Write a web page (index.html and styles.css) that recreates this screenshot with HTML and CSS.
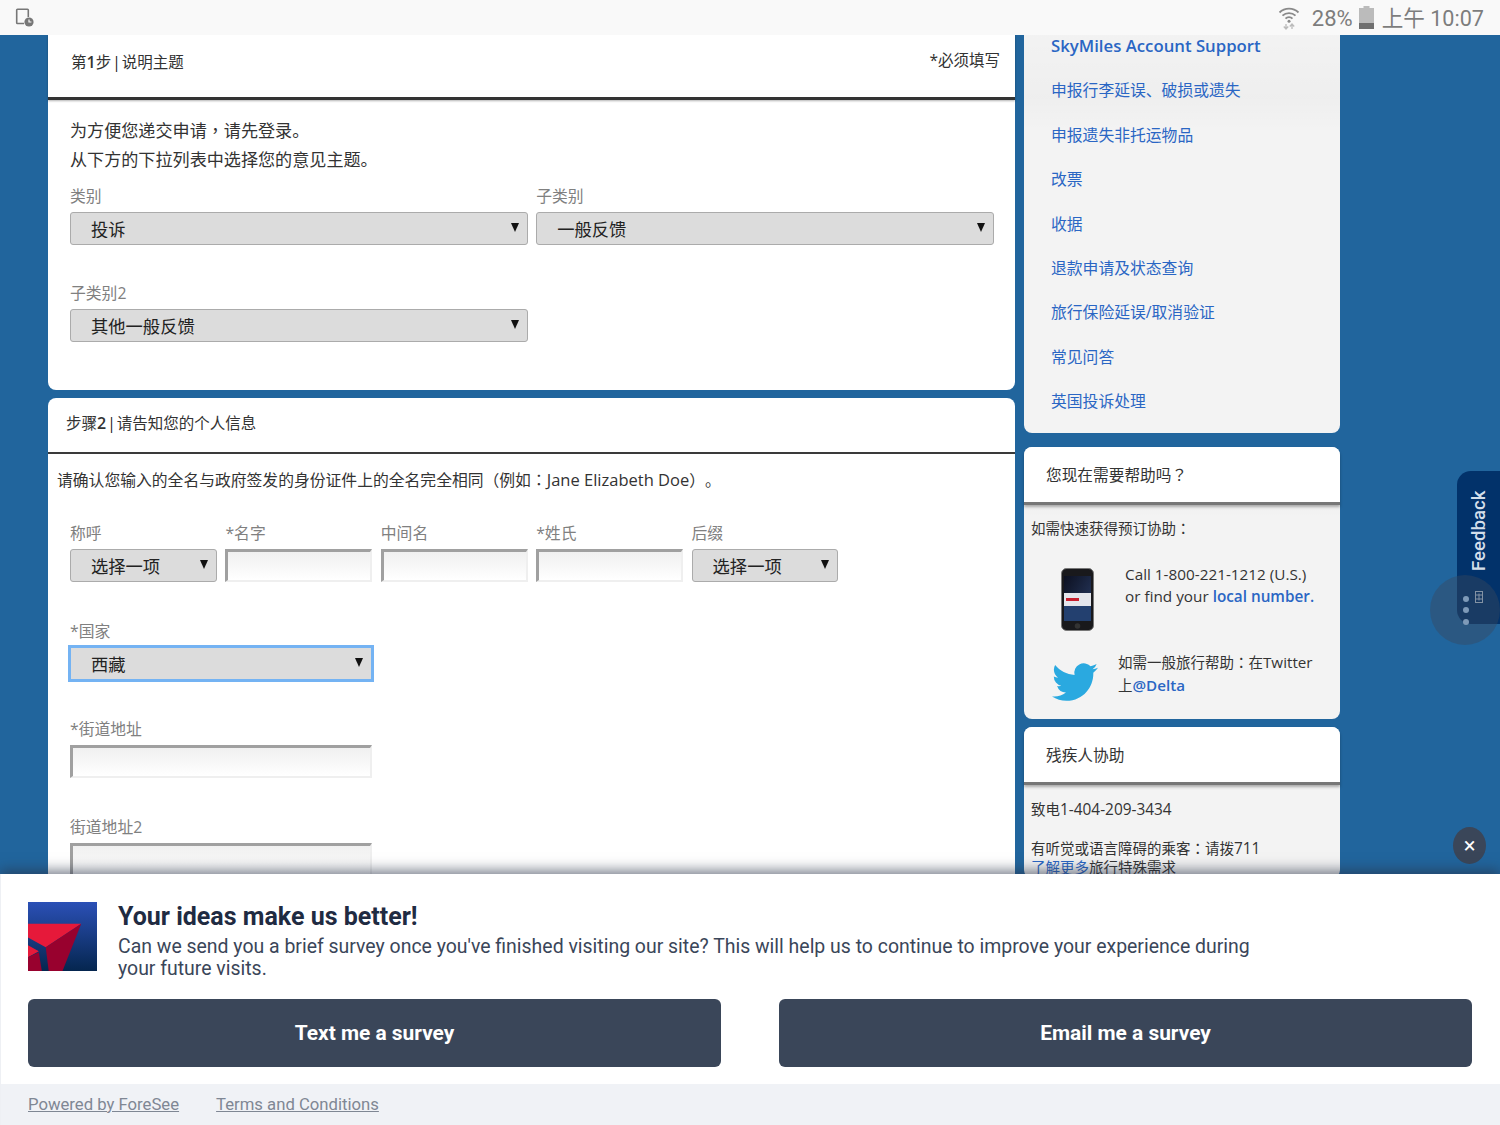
FILE: index.html
```html
<!DOCTYPE html>
<html lang="zh-CN">
<head>
<meta charset="utf-8">
<title>Delta 意见反馈</title>
<link rel="stylesheet" href="styles.css">
</head>
<body>
<div class="app">
  <header class="status">
    <svg class="status-doc" viewBox="0 0 20 20" width="20" height="20" fill="none" stroke="#777" stroke-width="1.6">
      <path d="M9 15.5H2.5a.8.8 0 0 1-.8-.8V2a.8.8 0 0 1 .8-.8h10a.8.8 0 0 1 .8.8v7"/>
      <circle cx="14" cy="14" r="4.6" fill="#777" stroke="none"/>
      <path d="M14 11.5V14h2.4" stroke="#f9f9f9" stroke-width="1.2"/>
    </svg>
    <div class="status-right">
      <svg class="wifi" viewBox="0 0 22 24" width="22" height="24" fill="none" stroke="#8a8a8a" stroke-width="1.8">
        <path d="M1.5 6.5a13.5 13.5 0 0 1 19 0"/>
        <path d="M4.5 9.7a9.3 9.3 0 0 1 13 0"/>
        <path d="M7.5 12.7a5 5 0 0 1 7 0"/>
        <circle cx="11" cy="15.2" r="1.5" fill="#8a8a8a" stroke="none"/>
        <path d="M8 18v5M5.8 20.5 8 23l2.2-2.5M14 23v-5M11.8 20.5 14 18l2.2 2.5" stroke="#bbb" stroke-width="1.3"/>
      </svg>
      <span class="pct">28%</span>
      <svg class="battery" viewBox="0 0 15 23" width="15" height="23">
        <rect x="4.5" y="0" width="6" height="2" fill="#bbb"/>
        <rect x="0" y="2" width="15" height="15" fill="#bbb"/>
        <rect x="0" y="17" width="15" height="6" fill="#6f6f6f"/>
      </svg>
      <span class="clock">上午 10:07</span>
    </div>
  </header>

  <main class="main">
    <div class="col-left">
      <section class="card card-first">
        <div class="card-head">
          <span>第<b class="num">1</b>步<span class="pipe">|</span>说明主题</span>
          <span class="required">*必须填写</span>
        </div>
        <div class="card-body">
          <p class="lead">为方便您递交申请<span class="pn" lang="zh-TW">，</span>请先登录。<br>从下方的下拉列表中选择您的意见主题。</p>
          <div class="form-grid">
            <div class="field span-3">
              <label class="lbl">类别</label>
              <div class="select-wrap"><select class="sel"><option>投诉</option></select></div>
            </div>
            <div class="field span-3">
              <label class="lbl">子类别</label>
              <div class="select-wrap"><select class="sel"><option>一般反馈</option></select></div>
            </div>
            <div class="field span-3">
              <label class="lbl">子类别2</label>
              <div class="select-wrap"><select class="sel"><option>其他一般反馈</option></select></div>
            </div>
          </div>
        </div>
      </section>

      <section class="card card-second">
        <div class="card-head head-thin">
          <span>步骤<b class="num">2</b><span class="pipe">|</span>请告知您的个人信息</span>
        </div>
        <p class="notice">请确认您输入的全名与政府签发的身份证件上的全名完全相同（例如<span class="pn" lang="zh-TW">：</span><span class="latin-lg">Jane Elizabeth Doe</span>）。</p>
        <div class="form-grid personal">
          <div class="field">
            <label class="lbl">称呼</label>
            <div class="select-wrap"><select class="sel"><option>选择一项</option></select></div>
          </div>
          <div class="field">
            <label class="lbl">*名字</label>
            <input class="inp" type="text">
          </div>
          <div class="field">
            <label class="lbl">中间名</label>
            <input class="inp" type="text">
          </div>
          <div class="field">
            <label class="lbl">*姓氏</label>
            <input class="inp" type="text">
          </div>
          <div class="field">
            <label class="lbl">后缀</label>
            <div class="select-wrap"><select class="sel"><option>选择一项</option></select></div>
          </div>
          <div class="field wide-row">
            <label class="lbl">*国家</label>
            <div class="select-wrap focused"><select class="sel"><option>西藏</option></select></div>
          </div>
          <div class="field wide-row">
            <label class="lbl">*街道地址</label>
            <input class="inp" type="text">
          </div>
          <div class="field wide-row">
            <label class="lbl">街道地址2</label>
            <input class="inp" type="text">
          </div>
        </div>
      </section>
    </div>

    <aside class="col-right">
      <nav class="side-card side-links">
        <a href="#">SkyMiles Account Support</a>
        <a href="#">申报行李延误、破损或遗失</a>
        <a href="#">申报遗失非托运物品</a>
        <a href="#">改票</a>
        <a href="#">收据</a>
        <a href="#">退款申请及状态查询</a>
        <a href="#">旅行保险延误/取消验证</a>
        <a href="#">常见问答</a>
        <a href="#">英国投诉处理</a>
      </nav>

      <section class="side-card">
        <h3 class="side-head">您现在需要帮助吗<span class="pn" lang="zh-TW">？</span></h3>
        <p class="side-line">如需快速获得预订协助<span class="pn" lang="zh-TW">：</span></p>
        <div class="call-row">
          <svg class="phone" viewBox="0 0 33 63" width="33" height="63">
            <defs>
              <linearGradient id="screenTop" x1="0" y1="0" x2="1" y2="1">
                <stop offset="0" stop-color="#0c1020"/>
                <stop offset="1" stop-color="#2a3d66"/>
              </linearGradient>
            </defs>
            <rect x="0.500" y="0.500" width="32" height="62" rx="5" fill="#19191c" stroke="#777"/>
            <rect x="3" y="8" width="27" height="45" fill="url(#screenTop)"/>
            <rect x="3" y="25" width="27" height="13" fill="#e4e6ec"/>
            <rect x="5" y="30" width="13" height="3" fill="#c8202f"/>
            <rect x="3" y="38" width="27" height="15" fill="#23406f"/>
            <circle cx="16.500" cy="58" r="2.800" fill="#333"/>
          </svg>
          <p class="call-text">Call 1-800-221-1212 (U.S.)<br>or find your <a class="strong-link" href="#">local number.</a></p>
        </div>
        <div class="tw-row">
          <svg class="bird" viewBox="0 0 24 24" width="46" height="46" preserveAspectRatio="none">
            <path fill="#2aa9e0" d="M23.953 4.57a10 10 0 0 1-2.825.775 4.958 4.958 0 0 0 2.163-2.723c-.951.555-2.005.959-3.127 1.184a4.92 4.92 0 0 0-8.384 4.482C7.69 8.095 4.067 6.13 1.64 3.162a4.822 4.822 0 0 0-.666 2.475c0 1.71.87 3.213 2.188 4.096a4.904 4.904 0 0 1-2.228-.616v.06a4.923 4.923 0 0 0 3.946 4.827 4.996 4.996 0 0 1-2.212.085 4.936 4.936 0 0 0 4.604 3.417 9.867 9.867 0 0 1-6.102 2.105c-.39 0-.779-.023-1.17-.067a13.995 13.995 0 0 0 7.557 2.209c9.053 0 13.998-7.496 13.998-13.985 0-.21 0-.42-.015-.63A9.935 9.935 0 0 0 24 4.59z"/>
          </svg>
          <p class="tw-text">如需一般旅行帮助<span class="pn" lang="zh-TW">：</span>在<span class="latin-sm">Twitter</span><br>上<a class="latin-sm strong-link" href="#">@Delta</a></p>
        </div>
      </section>

      <section class="side-card">
        <h3 class="side-head">残疾人协助</h3>
        <p class="side-line phone-line">致电<span class="latin-md">1-404-209-3434</span></p>
        <p class="side-line tight">有听觉或语言障碍的乘客<span class="pn" lang="zh-TW">：</span>请拨<span class="latin-md">711</span><br><a href="#">了解更多</a>旅行特殊需求</p>
      </section>
    </aside>
  </main>

  <div class="feedback">
    <span class="feedback-text">Feedback</span>
    <svg class="feedback-icon" viewBox="0 0 8 12" width="8" height="12" fill="none" stroke="#b9c8d8" stroke-width="1">
      <rect x="0.500" y="0.500" width="7" height="11"/>
      <path d="M0.500 4h7M0.500 8h7M4 2.500v7"/>
    </svg>
  </div>
  <div class="float-dots"><i></i><i></i><i></i></div>
  <button class="close-float" type="button" aria-label="关闭">×</button>

  <section class="survey">
    <div class="survey-main">
      <div class="survey-top">
        <svg class="logo" viewBox="0 0 70 70" width="69" height="69">
          <defs>
            <linearGradient id="logoBlue" x1="0" y1="0" x2="0" y2="1">
              <stop offset="0" stop-color="#2b50b6"/>
              <stop offset="1" stop-color="#05264f"/>
            </linearGradient>
          </defs>
          <rect width="70" height="70" fill="url(#logoBlue)"/>
          <polygon points="0,22 54,22 18,46 0,36" fill="#e6193a"/>
          <polygon points="54,22 35,70 21,70 18,46" fill="#98012e"/>
          <polygon points="0,56 11,50 0,44" fill="#e6193a"/>
          <polygon points="0,56 11,51 14,70 0,70" fill="#98012e"/>
        </svg>
        <div class="survey-copy">
          <h2>Your ideas make us better!</h2>
          <p>Can we send you a brief survey once you've finished visiting our site? This will help us to continue to improve your experience during your future visits.</p>
        </div>
      </div>
      <div class="survey-actions">
        <button class="survey-btn" type="button">Text me a survey</button>
        <button class="survey-btn" type="button">Email me a survey</button>
      </div>
    </div>
    <footer class="survey-foot">
      <a href="#">Powered by ForeSee</a>
      <a href="#">Terms and Conditions</a>
    </footer>
  </section>
</div>
</body>
</html>
```

FILE: styles.css
```css
* { box-sizing: border-box; }
html, body { margin: 0; padding: 0; }
body {
  font-family: "Open Sans", "Noto Sans CJK SC", sans-serif;
  color: #333;
  background: #21659d;
  text-spacing-trim: space-all;
}
p, h2, h3 { margin: 0; }
a { color: #2a66c4; text-decoration: none; }

.pn { font-family: "Noto Sans CJK TC", sans-serif; }
.pipe { margin: 0 1px; color: #222; }
.latin-lg { font-size: 16.500px; }
.latin-md { font-size: 15.400px; }
.latin-sm { font-size: 15.200px; }
.strong-link { font-weight: 600; }

.app { position: relative; width: 1500px; height: 1125px; overflow: hidden; display: flex; flex-direction: column; }

/* status bar */
.status {
  flex: 0 0 35px;
  background: #f9f9f9;
  display: flex;
  align-items: center;
  justify-content: space-between;
  padding: 0 16px 0 15px;
  color: #7d7d7d;
  font-family: Roboto, "Noto Sans CJK SC", sans-serif;
  font-size: 22px;
}
.status-right { display: flex; align-items: center; }
.wifi { margin-right: 12px; }
.pct { margin-top: 1px; }
.battery { margin: 0 8px 0 6px; }
.clock { font-size: 21.600px; margin-top: -3px; }
.status-doc { margin-top: 1px; }

/* columns */
.main { flex: 1; display: flex; gap: 9px; padding-left: 48px; align-items: flex-start; overflow: hidden; }
.col-left { flex: 0 0 967px; min-width: 0; display: flex; flex-direction: column; gap: 8px; }
.col-right { flex: 0 0 316px; min-width: 0; display: flex; flex-direction: column; gap: 8px; }

/* cards */
.card { background: #fff; }
.card-first { border-radius: 0 0 8px 8px; height: 355px; }
.card-second { border-radius: 8px 8px 0 0; height: 900px; }
.card-head {
  height: 65px;
  padding: 0 15px 10px 23px;
  display: flex;
  align-items: center;
  justify-content: space-between;
  font-size: 15.500px;
  border-bottom: 3px solid #333;
  box-shadow: 0 1px 2px rgba(0,0,0,.3);
}
.num { font-weight: 600; font-size: 16px; }
.required { margin-top: -4px; }
.head-thin {
  height: 56px;
  padding: 0 16px 6px 18px;
  border-bottom: 2px solid #3a3a3a;
  box-shadow: none;
}
.card-body { padding: 15px 0 0 22px; }
.lead { font-size: 17.100px; line-height: 29px; }
.notice { font-size: 15.800px; line-height: 29px; padding: 11px 9px 0; }

/* forms */
.form-grid {
  display: grid;
  grid-template-columns: repeat(6, 146.800px);
  column-gap: 8.600px;
  row-gap: 37px;
  margin-top: 11px;
}
.personal { margin: 27px 0 0 22px; row-gap: 38px; }
.field { min-width: 0; }
.span-3 { grid-column: span 3; }
.wide-row { grid-column: 1 / span 2; }
.lbl { display: block; height: 22px; line-height: 22px; margin-bottom: 5px; font-size: 15.800px; color: #808080; }
.select-wrap { position: relative; height: 33px; }
.select-wrap::after {
  content: "";
  position: absolute;
  right: 9px;
  top: 11px;
  border-left: 4.500px solid transparent;
  border-right: 4.500px solid transparent;
  border-top: 9px solid #111;
  pointer-events: none;
}
.sel {
  display: block;
  width: 100%;
  height: 100%;
  appearance: none;
  -webkit-appearance: none;
  background: #dcdcdc;
  border: 1px solid #ababab;
  border-radius: 3px;
  padding: 2px 0 0 20px;
  font-family: inherit;
  font-size: 17.300px;
  color: #222;
}
.focused { outline: 3px solid #74b3f3; outline-offset: -1px; }
.focused .sel { border-radius: 0; border-color: #dcdcdc; }
.inp {
  display: block;
  width: 100%;
  height: 33px;
  padding: 0;
  border-style: solid;
  border-width: 3px 2px 2px 3px;
  border-color: #a0a0a0 #efefef #efefef #a0a0a0;
  background: linear-gradient(#f0f0f0, #fff);
}

/* sidebar */
.side-card {
  background:
    linear-gradient(transparent 0, rgba(0,0,0,.018) 18%, transparent 26%),
    #f3f3f3;
  border-radius: 8px;
}
.side-links {
  margin-top: -11px;
  margin-bottom: 6px;
  padding: 0 0 9px 27px;
  display: flex;
  flex-direction: column;
  font-size: 15.800px;
  border-radius: 0 0 8px 8px;
}
.side-links a { line-height: 44.400px; }
.side-links a:first-child { font-size: 16.750px; font-weight: 600; }
.side-head {
  height: 58px;
  padding: 0 22px 0;
  display: flex;
  align-items: center;
  background: #fff;
  border-radius: 8px 8px 0 0;
  border-bottom: 3px solid #777;
  box-shadow: 0 2px 3px rgba(0,0,0,.3);
  font-size: 15.700px;
  font-weight: 400;
}
.side-line { padding: 11px 7px 0; font-size: 14.500px; line-height: 24px; }
.phone-line { padding-top: 13px; }
.tight { padding-top: 16px; line-height: 19.500px; }
.call-row { display: flex; padding: 27px 0 0 37px; }
.call-text { margin: -5px 0 0 31px; font-size: 15.300px; line-height: 22px; }
.tw-row { display: flex; padding: 20px 0 14px 28px; }
.bird { margin-top: 8px; }
.tw-text { margin: -1px 0 0 20px; font-size: 14.500px; line-height: 23px; }

/* overlays */
.feedback {
  position: absolute;
  right: 0;
  top: 471px;
  width: 43px;
  height: 153px;
  background: #02326a;
  border-radius: 14px 0 0 14px;
  display: flex;
  flex-direction: column;
  align-items: center;
}
.feedback-text {
  writing-mode: vertical-rl;
  transform: rotate(180deg);
  height: 80px;
  margin-top: 20px;
  font-family: Roboto, sans-serif;
  font-size: 18.600px;
  font-weight: 500;
  color: #d4dfea;
  white-space: nowrap;
}
.feedback-icon { margin: 20px 0 0 0; }
.float-dots {
  position: absolute;
  left: 1430px;
  top: 575px;
  width: 70px;
  height: 70px;
  border-radius: 35px;
  background: rgba(58,72,92,.42);
  display: flex;
  flex-direction: column;
  align-items: center;
  justify-content: center;
  gap: 5.500px;
  padding-left: 2px;
}
.float-dots i { width: 6px; height: 6px; border-radius: 50%; background: #7e9ab8; display: block; }
.close-float {
  position: absolute;
  left: 1453px;
  top: 827px;
  width: 33px;
  height: 37px;
  border: 0;
  border-radius: 50%;
  background: #3a4659;
  color: #fff;
  font-family: Roboto, sans-serif;
  font-size: 22px;
  line-height: 37px;
  padding: 0;
}

/* survey */
.survey {
  position: absolute;
  left: 0;
  right: 0;
  bottom: 0;
  height: 251px;
  background: #fff;
  box-shadow: 0 -4px 12px rgba(40,50,70,.6);
  font-family: Roboto, sans-serif;
  display: flex;
  flex-direction: column;
  border-left: 1px solid #eef0f4;
}
.survey-main { flex: 1; padding: 28px 28px 0 27px; }
.survey-top { display: flex; height: 97px; }
.logo { flex: none; }
.survey-copy { margin-left: 21px; width: 1145px; }
.survey-copy h2 { font-size: 25px; font-weight: 700; line-height: 28px; color: #1f2b42; padding-top: 1px; }
.survey-copy p { font-size: 19.440px; line-height: 22px; color: #3a4659; margin-top: 5px; }
.survey-actions { display: flex; gap: 58px; }
.survey-btn {
  flex: 1;
  height: 68px;
  border: 0;
  border-radius: 6px;
  background: #3a4659;
  color: #fff;
  font-family: inherit;
  font-size: 20.900px;
  font-weight: 700;
}
.survey-foot {
  flex: 0 0 41px;
  background: #f0f2f6;
  padding: 0 27px;
  display: flex;
  align-items: center;
  gap: 37px;
  font-size: 16.700px;
}
.survey-foot a { color: #7f8794; text-decoration: underline; }
```
